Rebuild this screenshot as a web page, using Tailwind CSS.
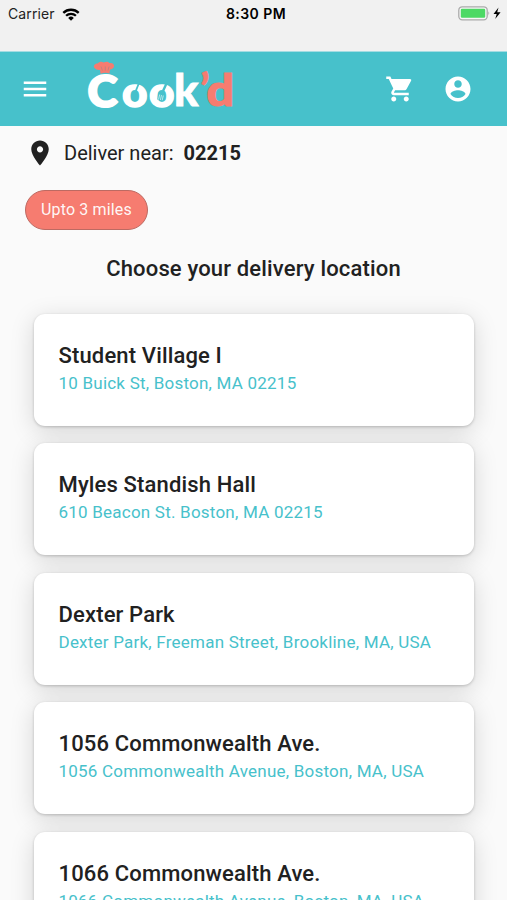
<!DOCTYPE html>
<html lang="en">
<head>
<meta charset="utf-8">
<title>Cook'd</title>
<script src="https://cdn.jsdelivr.net/npm/@tailwindcss/browser@4"></script>
</head>
<body class="h-[900px] w-[507px] overflow-hidden bg-[#fafafa] font-[Roboto,sans-serif] text-[#212121]">
<div class="flex h-[51px] items-start justify-between bg-[#f1f1f1] font-[Inter,sans-serif] text-black">
  <div class="flex w-[170px] items-center pt-1 pl-2">
    <span class="text-[14px] leading-5 tracking-[0.1px] text-[#222]">Carrier</span>
    <svg class="ml-[7px] h-[13px] w-[18px]" viewBox="0 0 18 13" fill="none" stroke="#000" stroke-width="2.3"><path d="M1.3 4.9a11 11 0 0 1 15.4 0M4.1 7.8a7 7 0 0 1 9.8 0"/><path d="M6.2 9.9a4 4 0 0 1 5.6 0L9 12.8z" fill="#000" stroke="none"/></svg>
  </div>
  <span class="pt-1 pl-[5px] text-[14px] leading-5 font-semibold tracking-[0.45px]">8:30 PM</span>
  <div class="flex w-[170px] justify-end pt-[6px] pr-[5px]">
    <svg class="h-[15px] w-[44px]" viewBox="0 0 44 15"><rect x=".8" y=".8" width="28.4" height="13" rx="3.5" fill="#f7f7f7" stroke="#aaa" stroke-width="1.3"/><rect x="2.8" y="2.8" width="24.4" height="9" rx="1.2" fill="#4cd964"/><path d="M30.5 5.2q1.8 2 0 4.2z" fill="#999"/><path d="M40.5 1.5l-5 6.4h3.2l-1.5 5 5.4-6.7h-3.4z" fill="#000"/></svg>
  </div>
</div>
<header class="flex h-[75px] items-center border-t border-[#a4dce2] bg-[#47c1cb] text-white">
  <svg class="ml-5 h-[30px] w-[30px]" viewBox="0 0 24 24" fill="currentColor"><path d="M3 18h18v-2H3v2zm0-5h18v-2H3v2zm0-7v2h18V6H3z"/></svg>
  <svg class="ml-[30px] h-[74px] w-[160px] font-[Lato,sans-serif] font-black" viewBox="80 52 160 74" fill="#fff">
    <text x="87.5" y="106.5" font-size="43" textLength="30" lengthAdjust="spacingAndGlyphs" stroke="#fff" stroke-width="2">C</text>
    <text x="122" y="106.5" font-size="42" textLength="25.500" lengthAdjust="spacingAndGlyphs" stroke="#fff" stroke-width="1.400">o</text>
    <text x="149" y="106.500" font-size="42" textLength="25.500" lengthAdjust="spacingAndGlyphs" stroke="#fff" stroke-width="1.400">o</text>
    <text x="174" y="106" font-size="43" textLength="24.500" lengthAdjust="spacingAndGlyphs" stroke="#fff" stroke-width=".8">k</text>
    <text x="200" y="105" font-size="43" fill="#f67c70" stroke="#f67c70" stroke-width=".5">’</text>
    <text x="206.500" y="106" font-size="43" textLength="27.500" lengthAdjust="spacingAndGlyphs" fill="#f67c70" stroke="#f67c70" stroke-width="1.200">d</text>
    <path d="M94.500 68c-1.500-2 0-4.500 3-4.500 2-2 4.500-2 6-1 3-1.500 5-.8 6 .5 3-.5 5 1.500 4.500 3.500-.3 1.700-2 2.800-4 3l-.6 4q-4.500-1.400-8.800.3l-.6-3.800q-4 .3-5.500-2z" fill="#f67c70"/>
    <path d="M101 66.500l1.400 4M105.300 66.500v4M109 66.500l-1 4" stroke="#a98783" stroke-width=".7"/>
    <path d="M139 83l-3.800 9.500" stroke="#47c1cb" stroke-width="1.800"/>
    <path d="M166.500 83.500l-3.500 7.500" stroke="#47c1cb" stroke-width="2.400"/>
    <path d="M158.500 92.500l6 2-1.300 6.500-6-1.500z" fill="#47c1cb"/>
    <path d="M159.700 94.500l-1.200 5M161.500 95l-1.100 5M163.300 95.500l-1.100 4.800" stroke="#fff" stroke-width=".6"/>
  </svg>
  <svg class="ml-[144.500px] h-[30px] w-[30px]" viewBox="0 0 24 24" fill="currentColor"><path d="M7 18c-1.100 0-1.990.9-1.990 2S5.900 22 7 22s2-.9 2-2-.9-2-2-2zM1 2v2h2l3.600 7.590-1.350 2.450c-.16.280-.25.610-.25.960 0 1.100.9 2 2 2h12v-2H7.420c-.14 0-.25-.11-.25-.25l.03-.12.9-1.630h7.450c.75 0 1.410-.41 1.750-1.030l3.580-6.490A1.003 1.003 0 0 0 20 4H5.210l-.94-2H1zm16 16c-1.100 0-1.990.9-1.990 2s.89 2 1.990 2 2-.9 2-2-.9-2-2-2z"/></svg>
  <svg class="ml-[28.500px] h-[30px] w-[30px]" viewBox="0 0 24 24" fill="currentColor"><path d="M12 2C6.480 2 2 6.480 2 12s4.480 10 10 10 10-4.480 10-10S17.520 2 12 2zm0 3c1.660 0 3 1.340 3 3s-1.340 3-3 3-3-1.340-3-3 1.340-3 3-3zm0 14.200c-2.500 0-4.710-1.280-6-3.220.03-1.990 4-3.080 6-3.080 1.990 0 5.970 1.090 6 3.080-1.290 1.940-3.500 3.220-6 3.220z"/></svg>
</header>
<main>
  <div class="flex h-[54px] items-center pl-[25px] text-[20px]">
    <svg class="h-[30px] w-[30px]" viewBox="0 0 24 24" fill="currentColor"><path d="M12 2C8.130 2 5 5.130 5 9c0 5.250 7 13 7 13s7-7.750 7-13c0-3.870-3.130-7-7-7zm0 9.500c-1.380 0-2.500-1.120-2.500-2.500s1.120-2.500 2.500-2.500 2.500 1.120 2.500 2.500-1.120 2.500-2.500 2.500z"/></svg>
    <span class="ml-[9px]">Deliver near:</span><b class="ml-[10px]">02215</b>
  </div>
  <div class="mt-[10px] ml-[25px] flex h-[40px] w-[123px] items-center justify-center rounded-full border border-[#bd6a62] bg-[#f67c70] text-[16px] tracking-[0.15px] text-white/95">Upto 3 miles</div>
  <h1 class="mt-[22px] text-center text-[22px] leading-[33px] font-medium tracking-[0.16px]">Choose your delivery location</h1>
  <div class="mt-[28.6px] flex flex-col gap-[17.5px] px-[33.5px] *:h-[112px] *:shrink-0 *:rounded-[11px] *:bg-white *:px-[25px] *:pt-[27.4px] *:shadow-[0_1px_3px_#0003,0_5px_24px_#00000026]">
    <section><h2 class="text-[22px] leading-[30px] font-medium tracking-[0.15px]">Student Village I</h2><p class="text-[17px] leading-[25px] tracking-[0.22px] text-[#47c1cb]">10 Buick St, Boston, MA 02215</p></section>
    <section><h2 class="text-[22px] leading-[30px] font-medium tracking-[0.15px]">Myles Standish Hall</h2><p class="text-[17px] leading-[25px] tracking-[0.22px] text-[#47c1cb]">610 Beacon St. Boston, MA 02215</p></section>
    <section><h2 class="text-[22px] leading-[30px] font-medium tracking-[0.15px]">Dexter Park</h2><p class="text-[17px] leading-[25px] tracking-[0.22px] text-[#47c1cb]">Dexter Park, Freeman Street, Brookline, MA, USA</p></section>
    <section><h2 class="text-[22px] leading-[30px] font-medium tracking-[0.15px]">1056 Commonwealth Ave.</h2><p class="text-[17px] leading-[25px] tracking-[0.22px] text-[#47c1cb]">1056 Commonwealth Avenue, Boston, MA, USA</p></section>
    <section><h2 class="text-[22px] leading-[30px] font-medium tracking-[0.15px]">1066 Commonwealth Ave.</h2><p class="text-[17px] leading-[25px] tracking-[0.22px] text-[#47c1cb]">1066 Commonwealth Avenue, Boston, MA, USA</p></section>
  </div>
</main>
</body>
</html>
